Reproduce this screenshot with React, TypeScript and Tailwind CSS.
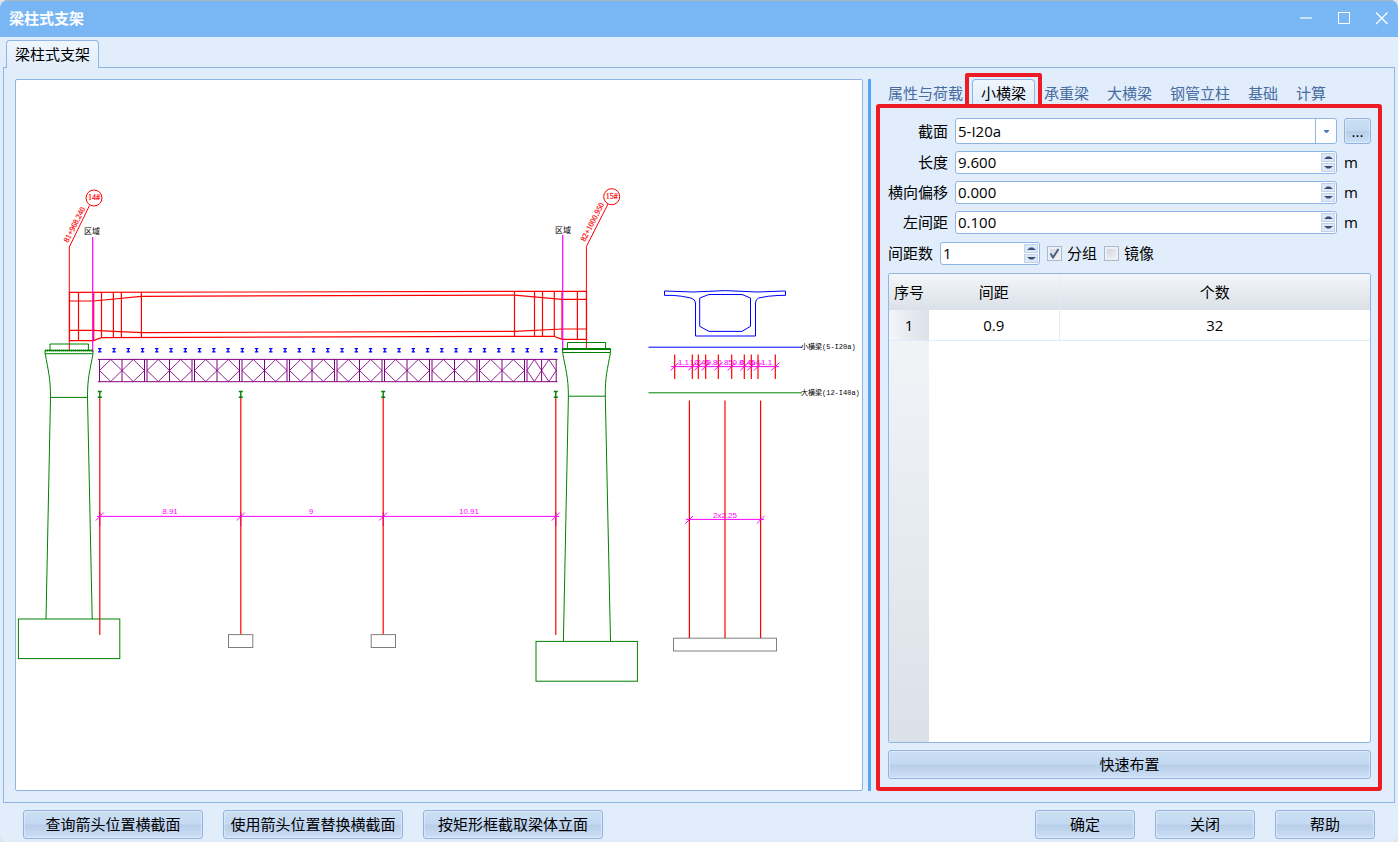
import { useState } from "react";
import type { ReactNode } from "react";
import clsx from "clsx";

const TABS = ["属性与荷载", "小横梁", "承重梁", "大横梁", "钢管立柱", "基础", "计算"];

export default function App() {
  const [tab, setTab] = useState("小横梁");

  return (
    <div className="h-screen bg-[#e4e4e4] font-['Open_Sans','Noto_Sans_CJK_SC',sans-serif] text-[15px] leading-5 text-black">
      <div className="flex h-full flex-col overflow-hidden rounded-lg bg-[#e1edfb]">
        <TitleBar />

        <div className="flex pt-[3px] pl-[6px]">
          <button
            type="button"
            className="relative z-10 -mb-px h-7 rounded-t-[4px] border border-b-0 border-[#8fb5e6] bg-linear-to-b from-[#f0f6fd] to-[#e1edfb] px-2 pb-[2px]"
          >
            梁柱式支架
          </button>
        </div>

        <main className="mx-[3px] flex min-h-0 flex-1 gap-[5px] border border-[#8fb5e6] py-[11px] pr-3 pl-[11px]">
          <div className="min-w-0 flex-1 rounded-[2px] border border-[#8fb5e6] bg-white">
            <Drawing />
          </div>
          <div className="w-[3px] bg-[#55a5fb]" />
          <aside className="flex w-[506px] flex-col">
            <div className="flex h-[25px] pl-[3px]">
              {TABS.map((name) => (
                <button
                  key={name}
                  type="button"
                  onClick={() => setTab(name)}
                  className={clsx(
                    "relative rounded-t-[4px] border border-b-0 px-2 pt-px",
                    tab === name
                      ? "border-[#8fb5e6] bg-linear-to-b from-[#f0f6fd] to-[#e1edfb]"
                      : "border-transparent text-[#476c9f]",
                  )}
                >
                  {name}
                  {tab === name && (
                    <span className="absolute -inset-x-2 -top-[7px] -bottom-1 rounded-[2px] border-4 border-[#ed1c24]" />
                  )}
                </button>
              ))}
            </div>
            <CrossBeamForm />
          </aside>
        </main>

        <footer className="flex gap-5 px-[23px] pt-[7px] pb-[3px]">
          <PushButton className="w-[180px]">查询箭头位置横截面</PushButton>
          <PushButton className="w-[180px]">使用箭头位置替换横截面</PushButton>
          <PushButton className="w-[180px]">按矩形框截取梁体立面</PushButton>
          <div className="flex-1" />
          <PushButton className="w-[100px]">确定</PushButton>
          <PushButton className="w-[100px]">关闭</PushButton>
          <PushButton className="w-[100px]">帮助</PushButton>
        </footer>
      </div>
    </div>
  );
}

function TitleBar() {
  return (
    <header className="flex h-[37px] items-center justify-between border-t border-[#aab4bd] bg-[#78b6f4] pr-[9px] pb-[2px] pl-[9px] text-white">
      <h1 className="font-bold">梁柱式支架</h1>
      <div className="flex gap-[24px]">
        <button type="button" aria-label="最小化">
          <svg width="14" height="14" viewBox="0 0 14 14" stroke="currentColor" fill="none">
            <path d="M1 7H13" strokeWidth="2" opacity="0.6" />
          </svg>
        </button>
        <button type="button" aria-label="最大化">
          <svg width="14" height="14" viewBox="0 0 14 14" stroke="currentColor" fill="none">
            <rect x="1.5" y="1.5" width="11" height="11" />
          </svg>
        </button>
        <button type="button" aria-label="关闭窗口">
          <svg width="14" height="14" viewBox="0 0 14 14" stroke="currentColor" strokeWidth="1.3" fill="none">
            <path d="M1 1.5L12.5 13M12.5 1.5L1 13" />
          </svg>
        </button>
      </div>
    </header>
  );
}

function PushButton({ className, children }: { className?: string; children: ReactNode }) {
  return (
    <button
      type="button"
      className={clsx(
        "h-[29px] shrink-0 rounded-[3px] border border-[#90b3e0] bg-[linear-gradient(#cbdff3,#c4d9f2_48%,#b8cde8_52%,#cde0f7)] pb-[2px] inset-ring inset-ring-white/35",
        className,
      )}
    >
      {children}
    </button>
  );
}

function CrossBeamForm() {
  return (
    <section className="flex min-h-0 flex-1 flex-col gap-[7px] rounded-[3px] border-4 border-[#ed1c24] pt-[10px] pr-[7px] pb-2 pl-2">
      <div className="grid grid-cols-[60px_1fr_27px] items-center gap-[7px]">
        <label htmlFor="section" className="text-right">
          截面
        </label>
        <div className="relative">
          <select
            id="section"
            className="block h-[26px] w-full appearance-none rounded-[3px] border border-[#8fb5e6] bg-white pl-[2px] outline-none"
          >
            <option>5-I20a</option>
          </select>
          <span className="pointer-events-none absolute inset-y-0 right-0 flex w-[22px] items-center justify-center border-l border-[#8fb5e6]">
            <svg width="5" height="3" viewBox="0 0 5 3" fill="#4c7cb5">
              <path d="M0 0H5V1L3 3H2L0 1Z" />
            </svg>
          </span>
        </div>
        <button
          type="button"
          aria-label="选择截面"
          className="h-[26px] rounded-[3px] border border-[#90b3e0] bg-[linear-gradient(#cbdff3,#c4d9f2_48%,#b8cde8_52%,#cde0f7)] inset-ring inset-ring-white/35"
        >
          ...
        </button>

        <SpinRow id="length" label="长度" value="9.600" />
        <SpinRow id="offset" label="横向偏移" value="0.000" />
        <SpinRow id="left-gap" label="左间距" value="0.100" />
      </div>

      <div className="flex items-center gap-[7px] py-px">
        <label htmlFor="gap-count" className="pb-[2px]">
          间距数
        </label>
        <SpinBox id="gap-count" value="1" className="w-[100px]" />
        <CheckBox label="分组" defaultChecked />
        <CheckBox label="镜像" />
      </div>

      <GapTable />
      <PushButton>快速布置</PushButton>
    </section>
  );
}

function SpinRow({ id, label, value }: { id: string; label: string; value: string }) {
  return (
    <>
      <label htmlFor={id} className="pb-[2px] text-right">
        {label}
      </label>
      <SpinBox id={id} value={value} />
      <span className="pb-[2px]">m</span>
    </>
  );
}

function SpinBox({ id, value, className }: { id: string; value: string; className?: string }) {
  return (
    <div className={clsx("flex h-[23px] rounded-[3px] border border-[#8fb5e6] bg-white p-px", className)}>
      <input id={id} defaultValue={value} className="min-w-0 flex-1 pb-[2px] pl-px outline-none" />
      <div className="flex w-[14px] flex-col gap-px">
        <button type="button" aria-label="增加" className="flex flex-1 items-center justify-center border border-[#c0d2ea] bg-[#dce8f7]">
          <svg width="9" height="3" viewBox="0 0 9 3" fill="#3b4f73">
            <path d="M0 3L3 0.5H6L9 3Z" />
          </svg>
        </button>
        <button type="button" aria-label="减少" className="flex flex-1 items-center justify-center border border-[#c0d2ea] bg-[#dce8f7]">
          <svg width="9" height="3" viewBox="0 0 9 3" fill="#3b4f73">
            <path d="M0 0L3 2.5H6L9 0Z" />
          </svg>
        </button>
      </div>
    </div>
  );
}

function CheckBox({ label, defaultChecked }: { label: string; defaultChecked?: boolean }) {
  return (
    <label className="flex items-center gap-[5px]">
      <span className="relative flex">
        <input
          type="checkbox"
          defaultChecked={defaultChecked}
          className="peer size-[15px] appearance-none border border-[#a9b9ce] bg-linear-to-br from-[#cdd1d8] to-[#f5f6f8] inset-ring-2 inset-ring-[#eceff3]"
        />
        <svg
          viewBox="0 0 15 15"
          className="pointer-events-none absolute inset-0 hidden size-[15px] peer-checked:block"
          fill="none"
          stroke="#4a5f84"
          strokeWidth="2"
        >
          <path d="M3.5 7.5L6 11.5L11.5 3" />
        </svg>
      </span>
      <span className="pb-[2px]">{label}</span>
    </label>
  );
}

function GapTable() {
  return (
    <div className="flex min-h-0 flex-1 flex-col overflow-hidden rounded-[2px] border border-[#8fb5e6] bg-white">
      <table className="w-full table-fixed border-collapse text-center">
        <thead>
          <tr className="h-[36px] bg-linear-to-b from-[#f4f6f9] to-[#dae1e8]">
            <th className="w-10 pb-px font-normal">序号</th>
            <th className="w-[130px] border-r border-[#e1edfb] pb-px font-normal">间距</th>
            <th className="pb-px font-normal">个数</th>
          </tr>
        </thead>
        <tbody>
          <tr className="h-[30px] border-b border-[#e1edfb]">
            <th className="bg-linear-to-r from-[#f4f6f9] to-[#dae1e8] font-normal">1</th>
            <td className="border-r border-[#e1edfb]">0.9</td>
            <td>32</td>
          </tr>
        </tbody>
      </table>
      <div className="w-10 flex-1 bg-linear-to-b from-[#f1f4f7] to-[#dae1e8]" />
    </div>
  );
}

const RED = "#ff0000";
const GREEN = "#008000";
const BLUE = "#0000ff";
const PURPLE = "#800080";
const MAGENTA = "#ff00ff";

// bailey truss: nine double bays and a short closing one
const BAYS = [
  ...Array.from({ length: 9 }, (_, i) => [99.5 + i * 47.5, 22.5]),
  [527, 14.6],
];
const BEAM_X = [674.7, 692.3, 698.3, 705.7, 718.3, 731.7, 744.3, 751.3, 758, 775.3];
const BEAM_GAPS = ["1.1", "1.2", "0.45", "0.8", "0.85", "0.8", "0.45", "0.4", "1.1"];
const POST_X = [99.8, 240.8, 383.2, 555.8];

function Drawing() {
  return (
    <svg viewBox="16 80 846 710" className="size-full" fill="none" strokeWidth="1">
      {/* axis bubbles and station labels */}
      <g stroke={RED}>
        <circle cx="94" cy="198" r="8" />
        <path d="M89.5 205.5L69.3 247V351" />
        <circle cx="611.7" cy="196.7" r="8" />
        <path d="M608 204L586.4 246.5V349" />
      </g>
      <g fill={RED} stroke={RED} strokeWidth="0.2" fontFamily="Liberation Serif, serif" fontSize="8">
        <text x="94" y="200" textAnchor="middle">14#</text>
        <text x="611.7" y="199" textAnchor="middle">15#</text>
        <text transform="translate(68 243) rotate(-63)">81+968.240</text>
        <text transform="translate(585 242) rotate(-63)">82+1000.950</text>
      </g>
      <g fill="#000" fontFamily="Noto Sans CJK SC, sans-serif" fontSize="8">
        <text x="84" y="234">区域</text>
        <text x="555" y="233">区域</text>
      </g>

      {/* girder elevation */}
      <g stroke={RED} strokeWidth="1.2">
        <path d="M69.5 292.4L586.5 291.3V339.4H562L554 336.3L101.5 337.6L93.5 340.6H69.5Z" />
        <path d="M69.5 301H93.5L141.3 296.3L514.5 295.2L562 299.4H586.5" />
        <path d="M69.5 330.4H93.5L141.3 332.6L514.5 331.4L562 329H586.5" />
        <path d="M78.5 292V340.5M93.7 292V340.5M101.5 292V337.5M113.4 292V337.5M121.4 292V337.5M141.4 292V337.5" />
        <path d="M514.5 291V336.5M534.5 291V336.5M542.5 291V336.5M554.3 291V336.5M562 291V339.5M577.4 291V339.5" />
      </g>
      <path d="M92.7 237V352M562.7 235V351" stroke={MAGENTA} strokeWidth="1.2" />

      {/* piers */}
      <g stroke={GREEN}>
        <path d="M50 350V344H88.4V350M45 350.5H93V353.7H45ZM45.3 354C48 370 50.6 378 50.5 397.4L46 619M93 354C90 370 87.4 378 87.5 397.4L92.2 619M50.5 397.4H87.5" />
        <path d="M45 350.5H93" strokeWidth="2" strokeDasharray="1.5 0.5" />
        <rect x="18.4" y="619" width="101.4" height="39.6" />
        <path d="M567.4 348V342.5H605.6V348M562.4 349H610.6V352.5H562.4ZM562.7 353C565.5 369 568.4 377 568.4 396.2L563.4 641M610.4 353C607.5 369 605 377 605.3 396.2L610.5 641M568.4 396.2H605.3" />
        <path d="M562.4 349H610.6" strokeWidth="2" />
        <rect x="536" y="641.4" width="101.4" height="39.8" />
      </g>

      {/* distribution beams */}
      <g stroke={BLUE} strokeWidth="1.3">
        {Array.from({ length: 33 }, (_, i) => (
          <path
            key={i}
            transform={`translate(${99.8 + i * 14.25} 350.3)`}
            d="M-1.7 -1.6H1.7M-1.7 1.6H1.7M0 -1.6V1.6"
          />
        ))}
      </g>

      <g stroke={PURPLE}>
        <path d="M98 359.4H557.5M98 381.7H557.5" />
        {BAYS.map(([x, w]) => (
          <g key={x} transform={`translate(${x} 0)`}>
            <path d={`M0 359.5V381.5M${w} 359.5V381.5M${w * 2} 359.5V381.5`} />
            <path
              opacity="0.85"
              d={`M0 370.5L${w / 2} 359.5L${w} 370.5L${w / 2} 381.5ZM${w} 370.5L${w * 1.5} 359.5L${w * 2} 370.5L${w * 1.5} 381.5Z`}
            />
          </g>
        ))}
      </g>

      {/* posts */}
      {POST_X.map((x) => (
        <g key={x} transform={`translate(${x} 0)`}>
          <path d="M-2 391.5H2M-2 397.3H2M0 391.5V397.3" stroke={GREEN} strokeWidth="1.4" />
          <path d="M0 398V635" stroke={RED} strokeWidth="1.2" />
          <path d="M0 512V526" stroke="#e0105a" />
          <path d="M-4 520.5L4 512.5" stroke={MAGENTA} />
        </g>
      ))}
      <path d="M97 516.4H559" stroke={MAGENTA} />
      <g fill={MAGENTA} fontFamily="Liberation Sans, sans-serif" fontSize="8" textAnchor="middle">
        <text x="170" y="514">8.91</text>
        <text x="311" y="514">9</text>
        <text x="469" y="514">10.91</text>
        <text x="725" y="518">2x2.25</text>
        {BEAM_GAPS.map((gap, i) => (
          <text key={i} x={(BEAM_X[i] + BEAM_X[i + 1]) / 2} y="365">
            {gap}
          </text>
        ))}
      </g>
      <g stroke="#808080">
        <rect x="228.5" y="634.6" width="24.3" height="12.9" />
        <rect x="371.2" y="634.6" width="24.3" height="12.9" />
        <rect x="673.5" y="638.2" width="103" height="12.8" />
      </g>

      {/* cross section */}
      <g stroke={BLUE}>
        <path d="M664.5 291L693 292L725.5 290.6L757 292L785.5 291V295.4H779Q768 295.8 758.5 298Q755.5 299.5 755.5 303V336H695.5V303Q695.5 299.5 691 298Q681 295.8 673 295.4H664.5Z" />
        <path d="M709 294.5H742L750.5 298V326.3L742 331.4H709L699.7 326.3V298Z" />
        <path d="M648.5 347.2H802" />
      </g>
      <path d="M648.5 392.8H802" stroke={GREEN} />
      <g fill="#000" fontFamily="Liberation Mono, Noto Sans CJK SC, monospace" fontSize="7">
        <text x="801" y="349">小横梁(5-I20a)</text>
        <text x="801" y="395">大横梁(12-I40a)</text>
      </g>
      <path d="M671 366.6H779" stroke={MAGENTA} />
      {BEAM_X.map((x) => (
        <g key={x} transform={`translate(${x} 0)`}>
          <path d="M0 354.5V379" stroke={RED} strokeWidth="1.2" />
          <path d="M-4 370.5L4 362.5" stroke={MAGENTA} />
        </g>
      ))}
      <path d="M689.4 400.5V638M725 400.5V638M760.6 400.5V638" stroke={RED} strokeWidth="1.2" />
      <path d="M686 519.4H764M685.5 523.5L693 516M756.8 523.5L764.5 516" stroke={MAGENTA} />
    </svg>
  );
}
